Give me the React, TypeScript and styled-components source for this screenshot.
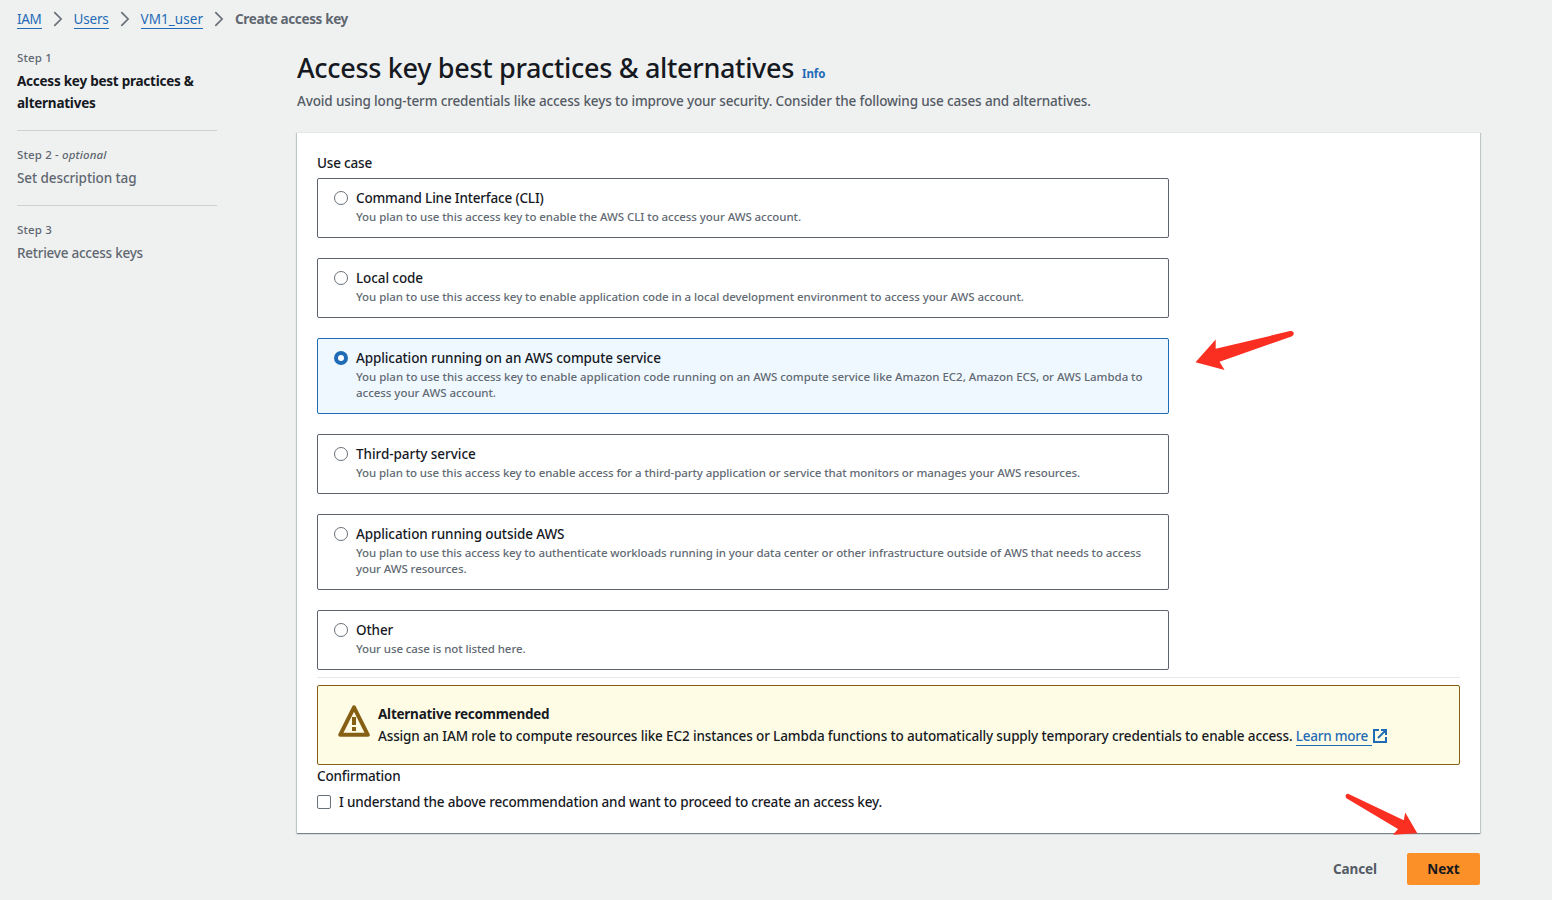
import React, { useState } from "react";
import styled, { createGlobalStyle } from "styled-components";

const GlobalStyle = createGlobalStyle`
  * { box-sizing: border-box; }
  body {
    margin: 0;
    background: #eff1f1;
    color: #16191f;
    font: 500 13.5px/22px "Noto Sans", "Open Sans", sans-serif;
    letter-spacing: -0.14px;
  }
`;

const Page = styled.div`
  height: 900px;
  padding: 8px 72px 0 17px;
  overflow: hidden;
`;

const Breadcrumbs = styled.nav`
  display: flex;
  align-items: flex-start;
  height: 22px;
`;

const Crumb = styled.a<{ $track: number }>`
  height: 21px;
  line-height: 22px;
  color: #1f6bb5;
  font-weight: 400;
  text-decoration: none;
  border-bottom: 1px solid #1f6bb5;
  letter-spacing: ${(p) => p.$track}px;
`;

const Separator = styled.svg`
  width: 16px;
  height: 16px;
  margin: 3px 8px 0;
  fill: none;
  stroke: #687078;
  stroke-width: 1.7;
`;

const CurrentCrumb = styled.span`
  color: #5f6770;
  font-weight: 700;
  letter-spacing: -0.36px;
`;

const Columns = styled.div`
  display: grid;
  grid-template-columns: 200px 1183px;
  column-gap: 80px;
`;

const Steps = styled.ol`
  margin: 20px 0 0;
  padding: 0;
  list-style: none;
`;

const Step = styled.li`
  padding-bottom: 16px;

  & + & {
    padding-top: 16px;
    border-top: 1px solid #cdd1d3;
  }
`;

const StepLabel = styled.div`
  margin-bottom: 4px;
  color: #5f6770;
  font-size: 11.5px;
  line-height: 16px;
  letter-spacing: 0.14px;
`;

const StepTitle = styled.div<{ $active?: boolean; $track?: number }>`
  color: ${(p) => (p.$active ? "#16191f" : "#5f6770")};
  font-weight: ${(p) => (p.$active ? 700 : 500)};
  letter-spacing: ${(p) => p.$track ?? -0.24}px;
`;

const Main = styled.main`
  padding-top: 20px;
`;

const Heading = styled.h1`
  display: flex;
  align-items: baseline;
  gap: 8px;
  margin: 0 0 4px;
  font-size: 27px;
  font-weight: 500;
  line-height: 36px;
  letter-spacing: -0.315px;
  white-space: nowrap;
`;

const InfoLink = styled.a`
  color: #1f6bb5;
  font-size: 11.5px;
  font-weight: 700;
  line-height: 16px;
  letter-spacing: -0.1px;
`;

const Description = styled.p`
  margin: 0 0 20px;
  color: #545b64;
`;

const Card = styled.section`
  height: 701px;
  padding: 19px 20px 20px;
  background: #fff;
  border-top: 1px solid #e4e8e8;
  box-shadow:
    0 1px 1px 0 rgba(0, 28, 36, 0.3),
    1px 1px 1px 0 rgba(0, 28, 36, 0.15),
    -1px 1px 1px 0 rgba(0, 28, 36, 0.15);
`;

const FieldLabel = styled.div`
  letter-spacing: -0.17px;
`;

const Tiles = styled.div`
  display: flex;
  flex-direction: column;
  gap: 20px;
  width: 852px;
  margin-top: 4px;
`;

const Tile = styled.label<{ $selected: boolean }>`
  display: flex;
  gap: 8px;
  padding: 8px 16px 12px;
  border: 1px solid ${(p) => (p.$selected ? "#1f6bb5" : "#5d6470")};
  border-radius: 2px;
  background: ${(p) => (p.$selected ? "#f0f8ff" : "#fff")};
`;

const Radio = styled.input`
  appearance: none;
  flex: none;
  width: 14px;
  height: 14px;
  margin: 4px 0 0;
  border: 1px solid #687078;
  border-radius: 50%;
  background: #fff;

  &:checked {
    border: 4px solid #1f6bb5;
  }
`;

const TileText = styled.div`
  display: flex;
  flex-direction: column;
`;

const TileTitle = styled.span<{ $track?: number }>`
  letter-spacing: ${(p) => p.$track ?? -0.1}px;
`;

const TileHint = styled.span<{ $track?: number }>`
  color: #626a73;
  font-size: 11.5px;
  line-height: 16px;
  letter-spacing: ${(p) => p.$track ?? -0.06}px;
`;

const Divider = styled.hr`
  height: 1px;
  margin: 7px 0;
  border: 0;
  background: #e6e9e9;
`;

const Alert = styled.div`
  display: flex;
  align-items: flex-start;
  gap: 8px;
  height: 80px;
  padding: 17px 20px 0;
  border: 1px solid #855f14;
  border-radius: 2px;
  background: #fffce6;
`;

const WarningIcon = styled.svg`
  width: 32px;
  height: 32px;
  margin-top: 2px;
`;

const AlertTitle = styled.div`
  font-weight: 700;
  letter-spacing: -0.24px;
`;

const AlertBody = styled.div`
  display: flex;
  white-space: pre;
  letter-spacing: -0.133px;
`;

const LearnMore = styled.a`
  display: flex;
  color: #1f6bb5;
`;

const LearnText = styled.span`
  height: 21px;
  width: 76px;
  border-bottom: 1px solid #1f6bb5;
  letter-spacing: -0.25px;
`;

const ExternalIcon = styled.svg`
  width: 16px;
  height: 16px;
  margin-top: 3px;
  fill: none;
  stroke: #1f6bb5;
  stroke-width: 2;
`;

const CheckRow = styled.label`
  display: flex;
  align-items: center;
  gap: 8px;
  margin-top: 4px;
  letter-spacing: -0.174px;
`;

const Checkbox = styled.input`
  appearance: none;
  width: 14px;
  height: 14px;
  margin: 0;
  border: 1px solid #687078;
  border-radius: 2px;
  background: #fff;
`;

const Actions = styled.div`
  display: flex;
  justify-content: flex-end;
  gap: 8px;
  margin-top: 20px;
`;

const Button = styled.button<{ $primary?: boolean }>`
  width: ${(p) => (p.$primary ? 73 : 88)}px;
  height: 32px;
  padding: 0;
  border: 0;
  border-radius: 2px;
  background: ${(p) => (p.$primary ? "#fb9029" : "transparent")};
  color: ${(p) => (p.$primary ? "#16191f" : "#545b64")};
  font: 700 13.5px/22px "Noto Sans", "Open Sans", sans-serif;
  letter-spacing: ${(p) => (p.$primary ? 0 : -0.12)}px;
`;

const Annotation = styled.svg<{ $x: number; $y: number }>`
  position: absolute;
  left: ${(p) => p.$x}px;
  top: ${(p) => p.$y}px;
  fill: #fa2f22;
  pointer-events: none;
`;

type Option = { title: string; hint: string; titleTrack?: number; hintTrack?: number };

const options: Option[] = [
  {
    title: "Command Line Interface (CLI)",
    hint: "You plan to use this access key to enable the AWS CLI to access your AWS account.",
    titleTrack: -0.17,
  },
  {
    title: "Local code",
    hint: "You plan to use this access key to enable application code in a local development environment to access your AWS account.",
  },
  {
    title: "Application running on an AWS compute service",
    hint: "You plan to use this access key to enable application code running on an AWS compute service like Amazon EC2, Amazon ECS, or AWS Lambda to access your AWS account.",
    hintTrack: -0.038,
  },
  {
    title: "Third-party service",
    hint: "You plan to use this access key to enable access for a third-party application or service that monitors or manages your AWS resources.",
    titleTrack: -0.05,
    hintTrack: -0.079,
  },
  {
    title: "Application running outside AWS",
    hint: "You plan to use this access key to authenticate workloads running in your data center or other infrastructure outside of AWS that needs to access your AWS resources.",
    hintTrack: -0.084,
  },
  { title: "Other", hint: "Your use case is not listed here.", hintTrack: -0.09 },
];

function Chevron() {
  return (
    <Separator viewBox="0 0 16 16">
      <path d="M4.3 1.2 11.1 8 4.3 14.8" />
    </Separator>
  );
}

export default function App() {
  const [selected, setSelected] = useState(2);
  return (
    <Page>
      <GlobalStyle />
      <Breadcrumbs>
        <Crumb $track={-0.3}>IAM</Crumb>
        <Chevron />
        <Crumb $track={-0.2}>Users</Crumb>
        <Chevron />
        <Crumb $track={0.05}>VM1_user</Crumb>
        <Chevron />
        <CurrentCrumb>Create access key</CurrentCrumb>
      </Breadcrumbs>
      <Columns>
        <Steps>
          <Step>
            <StepLabel>Step 1</StepLabel>
            <StepTitle $active>Access key best practices & alternatives</StepTitle>
          </Step>
          <Step>
            <StepLabel>
              Step 2 - <em>optional</em>
            </StepLabel>
            <StepTitle $track={-0.09}>Set description tag</StepTitle>
          </Step>
          <Step>
            <StepLabel>Step 3</StepLabel>
            <StepTitle>Retrieve access keys</StepTitle>
          </Step>
        </Steps>
        <Main>
          <Heading>
            Access key best practices & alternatives
            <InfoLink>Info</InfoLink>
          </Heading>
          <Description>
            Avoid using long-term credentials like access keys to improve your security. Consider the following use
            cases and alternatives.
          </Description>
          <Card>
            <FieldLabel>Use case</FieldLabel>
            <Tiles>
              {options.map((o, i) => (
                <Tile key={o.title} $selected={i === selected}>
                  <Radio type="radio" name="use-case" checked={i === selected} onChange={() => setSelected(i)} />
                  <TileText>
                    <TileTitle $track={o.titleTrack}>{o.title}</TileTitle>
                    <TileHint $track={o.hintTrack}>{o.hint}</TileHint>
                  </TileText>
                </Tile>
              ))}
            </Tiles>
            <Divider />
            <Alert>
              <WarningIcon viewBox="0 0 32 32">
                <path
                  d="M16 2.4 29.8 29.8H2.2Z"
                  fill="none"
                  stroke="#855f14"
                  strokeWidth="4"
                  strokeLinejoin="round"
                />
                <path d="M14 12h4v8h-4zM14 22h4v4h-4z" fill="#855f14" />
              </WarningIcon>
              <div>
                <AlertTitle>Alternative recommended</AlertTitle>
                <AlertBody>
                  {
                    "Assign an IAM role to compute resources like EC2 instances or Lambda functions to automatically supply temporary credentials to enable access. "
                  }
                  <LearnMore>
                    <LearnText>Learn more</LearnText>
                    <ExternalIcon viewBox="0 0 16 16">
                      <path d="M7 2H2v12h12V9M9 2h5v5M6 10l7.6-7.6" />
                    </ExternalIcon>
                  </LearnMore>
                </AlertBody>
              </div>
            </Alert>
            <FieldLabel>Confirmation</FieldLabel>
            <CheckRow>
              <Checkbox type="checkbox" />
              <span>I understand the above recommendation and want to proceed to create an access key.</span>
            </CheckRow>
          </Card>
          <Actions>
            <Button>Cancel</Button>
            <Button $primary>Next</Button>
          </Actions>
        </Main>
      </Columns>
      <Annotation $x={1194} $y={328} width="102" height="44" viewBox="1194 328 102 44">
        <path d="M1195.5 362.3 1215.7 339.5V348.8L1290 331.1Q1293.2 330.6 1293.8 333.2 1293.9 335.6 1291.5 336.4L1219.5 361.8 1224.6 370Z" />
      </Annotation>
      <Annotation $x={1344} $y={792} width="76" height="44" viewBox="1344 792 76 44">
        <path d="M1348.6 794 1403.8 820.2 1405.2 812.5 1417.3 833.2 1393 834.8 1398 829 1346.4 798.2Q1344.8 796.2 1346 794.8 1347.2 793.5 1348.6 794Z" />
      </Annotation>
    </Page>
  );
}
